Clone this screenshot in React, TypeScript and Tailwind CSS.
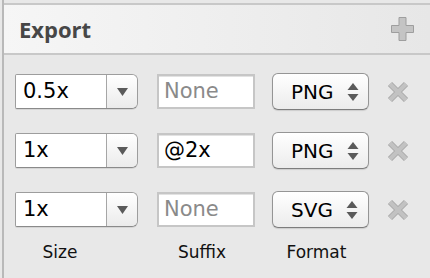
import React from "react";

const Caret = () => (
  <svg width="11" height="8" viewBox="0 0 11 8">
    <path d="M0 0 L11 0 L5.5 8 Z" fill="#5a5a5a" />
  </svg>
);

const UpDown = () => (
  <svg width="12" height="18" viewBox="0 0 12 18">
    <path d="M6 0 L11.5 7 L0.5 7 Z" fill="#5a5a5a" />
    <path d="M0.5 11 L11.5 11 L6 18 Z" fill="#5a5a5a" />
  </svg>
);

const XIcon = () => (
  <svg width="22" height="22" viewBox="0 0 22 22">
    <path d="M3 3 L19 19 M19 3 L3 19" stroke="#a9a9a9" strokeWidth="6" strokeLinecap="butt" />
    <path d="M3 3 L19 19 M19 3 L3 19" stroke="#c2c2c2" strokeWidth="4" strokeLinecap="butt" />
  </svg>
);

const PlusIcon = () => (
  <svg width="23" height="24" viewBox="0 0 23 24">
    <path
      d="M8 0.5 H15 V8.5 H22.5 V15.5 H15 V23.5 H8 V15.5 H0.5 V8.5 H8 Z"
      fill="#c4c4c4"
      stroke="#9e9e9e"
      strokeWidth="1"
    />
  </svg>
);

function SizeSelect({ value }: { value: string }) {
  return (
    <div className="flex h-[35px] w-[123px] rounded-l-[2px] rounded-r-[6px] border border-[#9d9d9d] border-b-[#8a8a8a] overflow-hidden shadow-[0_1px_0_rgba(0,0,0,0.08)]">
      <div className="flex flex-1 items-center bg-white pl-[7px] text-[21px] text-black">
        {value}
      </div>
      <div className="flex w-[31px] items-center justify-center border-l border-[#a6a6a6] bg-gradient-to-b from-white to-[#ebebeb]">
        <Caret />
      </div>
    </div>
  );
}

function SuffixInput({ value, placeholder }: { value?: string; placeholder: string }) {
  return (
    <div className="flex h-[35px] w-[98px] items-center border-2 border-[#c6c6c6] bg-white pl-[5px] text-[21px] shadow-[inset_0_1px_0_#e2e2e2]">
      {value ? (
        <span className="text-black">{value}</span>
      ) : (
        <span className="text-[#8a8a8a]">{placeholder}</span>
      )}
    </div>
  );
}

function FormatSelect({ value }: { value: string }) {
  return (
    <div className="flex h-[37px] w-[97px] items-center rounded-[6px] border border-[#959595] border-b-[#7d7d7d] bg-gradient-to-b from-white to-[#ececec] pl-[18px] shadow-[0_1px_1px_rgba(0,0,0,0.12)]">
      <span className="text-[20px] text-black">{value}</span>
      <span className="ml-[13px] flex items-center">
        <UpDown />
      </span>
    </div>
  );
}

function Row({ size, suffix, format }: { size: string; suffix?: string; format: string }) {
  return (
    <div className="flex h-[37px] items-center">
      <SizeSelect value={size} />
      <div className="ml-[19px]">
        <SuffixInput value={suffix} placeholder="None" />
      </div>
      <div className="ml-[17px]">
        <FormatSelect value={format} />
      </div>
      <div className="ml-[18px] flex items-center">
        <XIcon />
      </div>
    </div>
  );
}

export default function App() {
  return (
    <div
      className="relative h-[278px] w-[430px] overflow-hidden bg-[#e8e8e8]"
      style={{ fontFamily: '"DejaVu Sans", "Liberation Sans", sans-serif' }}
    >
      <div className="ml-[2px] h-full border-l-2 border-[#b9b9b9] pt-[3px]">
        <div className="flex h-[52px] items-center justify-between border-y-2 border-[#c8c8c8] bg-gradient-to-r from-[#f6f6f6] to-[#e7e7e7] pl-[15px] pr-[16px]">
          <span
            className="text-[22px] font-bold text-[#474747]"
            style={{ fontFamily: '"Open Sans", "DejaVu Sans", sans-serif' }}
          >
            Export
          </span>
          <PlusIcon />
        </div>
        <div className="flex flex-col gap-[22px] pl-[11px] pt-[18px]">
          <Row size="0.5x" format="PNG" />
          <Row size="1x" suffix="@2x" format="PNG" />
          <Row size="1x" format="SVG" />
        </div>
        <div className="mt-[12px] flex pl-[11px] text-[17px] text-[#111]">
          <div className="w-[90px] text-center">Size</div>
          <div className="ml-[48px] w-[98px] text-center">Suffix</div>
          <div className="ml-[17px] w-[97px] text-center">Format</div>
        </div>
      </div>
    </div>
  );
}
